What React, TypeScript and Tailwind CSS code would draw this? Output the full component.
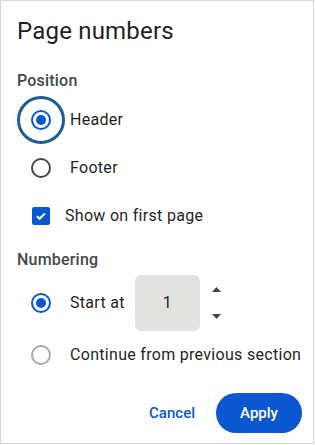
import React from "react";

const font = { fontFamily: "Roboto, 'Noto Sans', sans-serif" };

function Radio({ checked, focused, muted }: { checked?: boolean; focused?: boolean; muted?: boolean }) {
  return (
    <span
      className={`flex h-12 w-12 shrink-0 items-center justify-center rounded-full border-[3px] ${
        focused ? "border-[#1b5e91]" : "border-transparent"
      }`}
    >
      <span
        className={`flex h-5 w-5 items-center justify-center rounded-full border-2 ${
          checked ? "border-[#0b57d0]" : muted ? "border-[#a8a8a8]" : "border-[#444746]"
        }`}
      >
        {checked && <span className="h-2.5 w-2.5 rounded-full bg-[#0b57d0]" />}
      </span>
    </span>
  );
}

export default function App() {
  return (
    <div className="h-[445px] w-[315px] bg-white" style={font}>
      <div className="flex h-[444px] w-[314px] flex-col border border-[#d6d6d6] pl-4 pr-[11px] text-[#1f1f1f]">
        <h1 className="mt-[14px] text-[24px] leading-8 tracking-[0.2px] text-[#1f1f1f]">Page numbers</h1>

        {/* Position */}
        <div className="mt-6 text-[16px] font-medium leading-5 tracking-[0.2px] text-[#444746]">Position</div>
        <div className="mt-[5px] flex h-12 items-center">
          <Radio checked focused />
          <span className="ml-[5px] text-[16px] tracking-[0.3px]">Header</span>
        </div>
        <div className="flex h-12 items-center">
          <Radio />
          <span className="ml-[5px] text-[16px] tracking-[0.3px]">Footer</span>
        </div>
        <div className="flex h-12 items-center">
          <span className="flex h-12 w-12 items-center justify-center">
            <span className="flex h-[18px] w-[18px] items-center justify-center rounded-[2px] bg-[#0b57d0]">
              <svg width="12" height="12" viewBox="0 0 12 12" fill="none">
                <path d="M2 6.2l2.6 2.6L10 3.4" stroke="white" strokeWidth="2" />
              </svg>
            </span>
          </span>
          <span className="text-[16px] tracking-[0.3px]">Show on first page</span>
        </div>

        {/* Numbering */}
        <div className="mt-[10px] text-[16px] font-medium leading-5 tracking-[0.2px] text-[#444746]">Numbering</div>
        <div className="mt-[5px] flex h-14 items-center">
          <Radio checked />
          <span className="ml-[5px] text-[16px] tracking-[0.3px]">Start at</span>
          <div className="ml-[10px] flex h-14 w-[65px] items-center justify-center rounded-md bg-[#e2e3e1] text-[16px]">
            1
          </div>
          <div className="ml-3 flex h-14 flex-col justify-between py-[12px]">
            <svg width="9" height="5" viewBox="0 0 9 5">
              <path d="M0 5L4.5 0L9 5Z" fill="#444746" />
            </svg>
            <svg width="9" height="5" viewBox="0 0 9 5">
              <path d="M0 0L4.5 5L9 0Z" fill="#444746" />
            </svg>
          </div>
        </div>
        <div className="flex h-12 items-center">
          <Radio muted />
          <span className="ml-[5px] whitespace-nowrap text-[16px] tracking-[0.3px]">Continue from previous section</span>
        </div>

        {/* Actions */}
        <div className="mt-[14px] flex items-center justify-end">
          <button className="mr-[21px] text-[15px] font-medium text-[#0b57d0]">Cancel</button>
          <button className="h-10 w-[86px] rounded-full bg-[#0b57d0] text-[15px] font-medium text-white">
            Apply
          </button>
        </div>
      </div>
    </div>
  );
}
